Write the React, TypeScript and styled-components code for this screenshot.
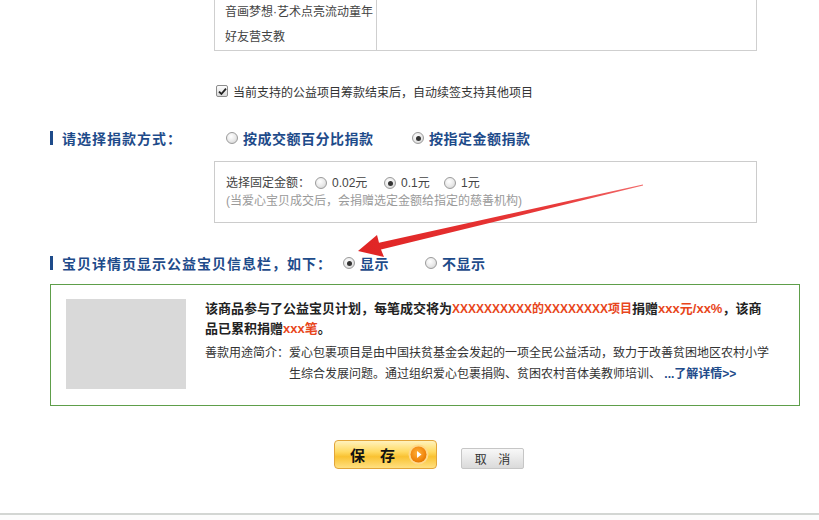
import React from 'react';
import styled, { createGlobalStyle } from 'styled-components';

const BLUE = '#1e4b8a';
const RED = '#e8461c';

const GlobalStyle = createGlobalStyle`
  html, body { margin: 0; padding: 0; background: #fff; }
  body {
    font-family: "Liberation Sans", "Noto Sans CJK SC", sans-serif;
    font-size: 12px;
    color: #333;
  }
  * { box-sizing: border-box; }
`;

const Page = styled.div`
  position: relative;
  width: 819px;
  height: 520px;
  overflow: hidden;
  display: flex;
  flex-direction: column;
  background: #fff;
`;

const TopTable = styled.div`
  margin-left: 214px;
  width: 543px;
  display: grid;
  grid-template-columns: 161px 1fr;
  border: 1px solid #cfcfcf;
  border-top: none;
`;

const Cell = styled.div`
  padding-left: 10px;
  line-height: 25px;
  white-space: nowrap;
  color: #444;
  & + & { border-left: 1px solid #cfcfcf; }
`;

const CheckRow = styled.label`
  margin: 30px 0 0 216px;
  height: 20px;
  display: flex;
  align-items: center;
  gap: 5px;
  color: #333;
`;

const CheckBox = styled.span`
  width: 12px;
  height: 12px;
  border: 1px solid #8c8c8c;
  border-radius: 2px;
  background: linear-gradient(#fdfdfd, #d9d9d9);
  display: inline-flex;
  align-items: center;
  justify-content: center;
`;

const SectionRow = styled.div<{ $mt: number }>`
  margin: ${(p) => p.$mt}px 0 0 50px;
  height: 20px;
  display: flex;
  align-items: center;
`;

const Bar = styled.span`
  width: 3px;
  height: 14px;
  background: ${BLUE};
  margin-right: 9px;
`;

const SectionLabel = styled.span<{ $w: number }>`
  width: ${(p) => p.$w}px;
  font-size: 14px;
  font-weight: bold;
  color: ${BLUE};
  letter-spacing: 1px;
  white-space: nowrap;
`;

const Option = styled.label<{ $w?: number; $big?: boolean }>`
  display: inline-flex;
  align-items: center;
  gap: 5px;
  width: ${(p) => (p.$w ? `${p.$w}px` : 'auto')};
  font-size: ${(p) => (p.$big ? 14 : 12)}px;
  font-weight: ${(p) => (p.$big ? 'bold' : 'normal')};
  color: ${(p) => (p.$big ? BLUE : '#444')};
  letter-spacing: ${(p) => (p.$big ? 0.5 : 0)}px;
  white-space: nowrap;
`;

const Radio = styled.span<{ $on?: boolean }>`
  position: relative;
  flex: none;
  width: 12px;
  height: 12px;
  border-radius: 50%;
  border: 1px solid #9b9b9b;
  background: radial-gradient(circle at 40% 35%, #ffffff 0%, #e8e8e8 55%, #c9c9c9 100%);
  &::after {
    content: '';
    display: ${(p) => (p.$on ? 'block' : 'none')};
    position: absolute;
    left: 2.5px;
    top: 2.5px;
    width: 5px;
    height: 5px;
    border-radius: 50%;
    background: #333;
  }
`;

const AmountBox = styled.div`
  margin: 13px 0 0 214px;
  width: 543px;
  height: 62px;
  border: 1px solid #cccccc;
  padding: 12px 10px 0 11px;
  line-height: 18px;
`;

const AmountRow = styled.div`
  display: flex;
  align-items: center;
  color: #444;
`;

const AmountLabel = styled.span`
  width: 89px;
  white-space: nowrap;
`;

const Hint = styled.div`
  color: #9a9a9a;
  white-space: nowrap;
`;

const GreenBox = styled.div`
  margin: 11px 0 0 50px;
  width: 750px;
  height: 122px;
  border: 1px solid #5e9e4a;
  padding: 14px 15px;
  display: flex;
  gap: 19px;
`;

const Thumb = styled.div`
  flex: none;
  width: 120px;
  height: 90px;
  background: #d9d9d9;
`;

const Info = styled.div`
  display: flex;
  flex-direction: column;
`;

const Title = styled.div`
  font-size: 13px;
  font-weight: bold;
  line-height: 19px;
  color: #222;
  white-space: nowrap;
`;

const Red = styled.span<{ $small?: boolean }>`
  color: ${RED};
  font-size: ${(p) => (p.$small ? '12px' : 'inherit')};
`;

const Intro = styled.div`
  margin-top: 5px;
  line-height: 21px;
  color: #333;
  padding-left: 84px;
  text-indent: -84px;
  white-space: nowrap;
`;

const More = styled.a`
  color: ${BLUE};
  font-weight: bold;
  text-decoration: none;
`;

const ButtonRow = styled.div`
  margin: 34px 0 0 334px;
  display: flex;
  align-items: flex-end;
  gap: 24px;
`;

const SaveButton = styled.button`
  width: 103px;
  height: 29px;
  border: 1px solid #e2a53a;
  border-radius: 4px;
  background: linear-gradient(#fff2bd 0%, #ffda62 40%, #f9c232 58%, #ffe081 100%);
  display: flex;
  align-items: center;
  padding: 0 0 0 15px;
  gap: 13px;
  font-family: "Liberation Sans", "Noto Sans CJK SC", sans-serif;
  font-size: 15px;
  font-weight: bold;
  color: #111;
  cursor: pointer;
`;

const CancelButton = styled.button`
  width: 63px;
  height: 21px;
  border: 1px solid #c6c6c6;
  border-radius: 2px;
  background: linear-gradient(#f8f8f8, #dadada);
  font-family: "Liberation Sans", "Noto Sans CJK SC", sans-serif;
  font-size: 12px;
  color: #333;
  letter-spacing: 4px;
  padding: 0 0 0 4px;
  cursor: pointer;
`;

const Footer = styled.div`
  margin-top: auto;
  height: 7px;
  border-top: 2px solid #d3d6d3;
  background: #fcfcfc;
`;

const ArrowLayer = styled.svg`
  position: absolute;
  left: 0;
  top: 0;
  pointer-events: none;
`;

const PlayCircle = () => (
  <svg width="21" height="21" viewBox="0 0 21 21">
    <defs>
      <radialGradient id="pc" cx="45%" cy="40%" r="60%">
        <stop offset="0%" stopColor="#ffb13b" />
        <stop offset="70%" stopColor="#f28a12" />
        <stop offset="100%" stopColor="#e57600" />
      </radialGradient>
    </defs>
    <circle cx="10.5" cy="10.5" r="10" fill="#ffd98a" />
    <circle cx="10.5" cy="10.5" r="8" fill="url(#pc)" />
    <path d="M9 7 L13.5 10.5 L9 14 Z" fill="#fff" />
  </svg>
);

const Check = () => (
  <svg width="9" height="9" viewBox="0 0 9 9">
    <path d="M1 4.6 L3.4 7 L8 1.6" fill="none" stroke="#222" strokeWidth="1.8" />
  </svg>
);

export default function App() {
  return (
    <Page>
      <GlobalStyle />
      <TopTable>
        <Cell>
          音画梦想·艺术点亮流动童年
          <br />
          好友营支教
        </Cell>
        <Cell />
      </TopTable>

      <CheckRow>
        <CheckBox>
          <Check />
        </CheckBox>
        当前支持的公益项目筹款结束后，自动续签支持其他项目
      </CheckRow>

      <SectionRow $mt={27}>
        <Bar />
        <SectionLabel $w={164}>请选择捐款方式：</SectionLabel>
        <Option $big $w={186}>
          <Radio />
          按成交额百分比捐款
        </Option>
        <Option $big>
          <Radio $on />
          按指定金额捐款
        </Option>
      </SectionRow>

      <AmountBox>
        <AmountRow>
          <AmountLabel>选择固定金额：</AmountLabel>
          <Option $w={69}>
            <Radio />
            0.02元
          </Option>
          <Option $w={60}>
            <Radio $on />
            0.1元
          </Option>
          <Option>
            <Radio />
            1元
          </Option>
        </AmountRow>
        <Hint>(当爱心宝贝成交后，会捐赠选定金额给指定的慈善机构)</Hint>
      </AmountBox>

      <SectionRow $mt={30}>
        <Bar />
        <SectionLabel $w={281}>宝贝详情页显示公益宝贝信息栏，如下：</SectionLabel>
        <Option $big $w={82}>
          <Radio $on />
          显示
        </Option>
        <Option $big>
          <Radio />
          不显示
        </Option>
      </SectionRow>

      <GreenBox>
        <Thumb />
        <Info>
          <Title>
            该商品参与了公益宝贝计划，每笔成交将为<Red $small>XXXXXXXXXX的XXXXXXXX项目</Red>捐赠
            <Red>xxx元/xx%</Red>，该商
            <br />
            品已累积捐赠<Red>xxx笔</Red>。
          </Title>
          <Intro>
            善款用途简介：爱心包裹项目是由中国扶贫基金会发起的一项全民公益活动，致力于改善贫困地区农村小学
            <br />
            生综合发展问题。通过组织爱心包裹捐购、贫困农村音体美教师培训、 <More href="#">...了解详情&gt;&gt;</More>
          </Intro>
        </Info>
      </GreenBox>

      <ButtonRow>
        <SaveButton>
          保　存
          <PlayCircle />
        </SaveButton>
        <CancelButton>取 消</CancelButton>
      </ButtonRow>

      <Footer />

      <ArrowLayer width="819" height="520" viewBox="0 0 819 520">
        <defs>
          <linearGradient id="ag" x1="643" y1="185" x2="358" y2="251" gradientUnits="userSpaceOnUse">
            <stop offset="0%" stopColor="#f26b6b" />
            <stop offset="30%" stopColor="#e83a3a" />
            <stop offset="100%" stopColor="#e02424" />
          </linearGradient>
        </defs>
        <polygon
          points="358,251 384,257 381,249.5 643.1,185.6 642.9,184.4 379,242.8 377,235"
          fill="url(#ag)"
        />
      </ArrowLayer>
    </Page>
  );
}
